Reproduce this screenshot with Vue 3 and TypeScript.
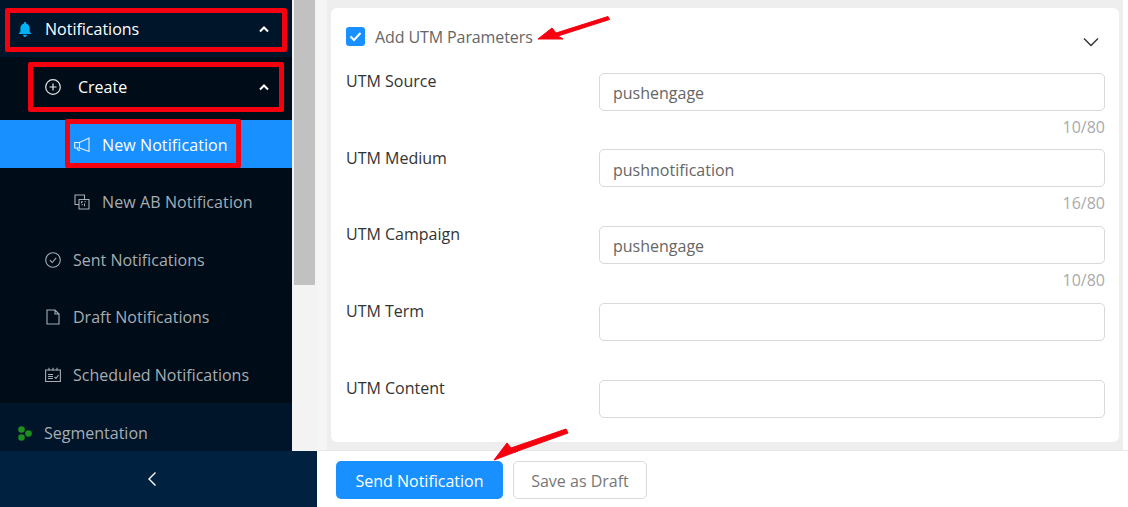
<script setup lang="ts">
const fields = [
  { label: 'UTM Source', value: 'pushengage', count: '10/80' },
  { label: 'UTM Medium', value: 'pushnotification', count: '16/80' },
  { label: 'UTM Campaign', value: 'pushengage', count: '10/80' },
  { label: 'UTM Term', value: '', count: '' },
  { label: 'UTM Content', value: '', count: '' },
]
</script>

<template>
  <div class="page">
    <div class="left">
      <div class="left-top">
        <aside class="sidebar">
          <div class="row top-row light">
            <svg class="ic1" width="14" height="15" viewBox="0 0 14 15"><path d="M7 0c.6 0 1 .4 1 1v.6c2.200.5 3.600 2.300 3.600 4.600v3.400L13.400 12H.6l1.800-2.400V6.200C2.400 3.900 3.800 2.100 6 1.600V1c0-.6.4-1 1-1zM5 12.800h4C9 14 8.100 15 7 15s-2-1-2-2.200z" fill="#00b2f5"/></svg>
            <span class="t1">Notifications</span>
            <svg class="caret" width="10" height="7" viewBox="0 0 10 7"><path d="M1 5.500 5 1.500l4 4" fill="none" stroke="#fff" stroke-width="2"/></svg>
          </div>
          <div class="sub">
            <div class="row create light">
              <svg class="ic2" width="16" height="16" viewBox="0 0 16 16" fill="none" stroke="#e8e8e8" stroke-width="1.200"><circle cx="8" cy="8" r="7.300"/><path d="M8 4.500v7M4.500 8h7"/></svg>
              <span class="t2">Create</span>
              <svg class="caret" width="10" height="7" viewBox="0 0 10 7"><path d="M1 5.500 5 1.500l4 4" fill="none" stroke="#fff" stroke-width="2"/></svg>
            </div>
            <div class="row nested active">
              <svg class="ic3" width="16" height="16" viewBox="0 0 16 16" fill="none" stroke="#e6f3ff" stroke-width="1.100"><path d="M15 1v13.500L5.500 11H.7V5.500H5.500zM5.500 5.500V11M3.500 11.300c-.4 1.700 1.200 2.700 2.500 1.700"/></svg>
              <span class="t3">New Notification</span>
            </div>
            <div class="row nested">
              <svg class="ic3" width="16" height="16" viewBox="0 0 16 16" fill="none" stroke="#a6adb4" stroke-width="1.100"><path d="M5 10.500H1V1h9.500v4"/><path d="M5 5.500h10V15H5z"/><path d="M7.500 9.200V7.800h1.400M10.500 7.800h1.300M7.500 10.800h1.400M10.500 12.300v-2.900"/></svg>
              <span class="t3">New AB Notification</span>
            </div>
            <div class="row">
              <svg class="ic2" width="16" height="16" viewBox="0 0 16 16" fill="none" stroke="#a6adb4" stroke-width="1.100"><circle cx="8" cy="8" r="7.300"/><path d="M4.800 8.200 7.200 10.500 11.200 5.800"/></svg>
              <span class="t4">Sent Notifications</span>
            </div>
            <div class="row">
              <svg class="ic2" width="16" height="16" viewBox="0 0 16 16" fill="none" stroke="#a6adb4" stroke-width="1.100"><path d="M2 1h8l4 4v10H2zM10 1v4h4"/></svg>
              <span class="t4">Draft Notifications</span>
            </div>
            <div class="row">
              <svg class="ic2" width="16" height="16" viewBox="0 0 16 16" fill="none" stroke="#a6adb4" stroke-width="1.100"><path d="M.6 3h14.800v11.500H.6zM4 .8v3M8 .8v3M12 .8v3M3 7.500h5M3 9.500h5M3 11.500h5M9.500 10l1.500 1.500 2.500-3.500"/></svg>
              <span class="t4">Scheduled Notifications</span>
            </div>
          </div>
          <div class="row seg">
            <svg class="ic1" width="14" height="15" viewBox="0 0 14 15" fill="#1e8e1e"><circle cx="3.500" cy="3.500" r="3.300"/><circle cx="3.500" cy="11.500" r="3.300"/><circle cx="10.500" cy="7.500" r="3.300"/></svg>
            <span class="t5">Segmentation</span>
          </div>
        </aside>
        <div class="scrollbar"><div class="thumb"></div></div>
      </div>
      <div class="collapse">
        <svg width="10" height="16" viewBox="0 0 10 16"><path d="M8.500 1.500 2 8l6.500 6.500" fill="none" stroke="#fff" stroke-width="1.400"/></svg>
      </div>
    </div>

    <main class="main">
      <div class="content">
        <section class="card">
          <div class="head">
            <span class="check">
              <svg width="13" height="11" viewBox="0 0 13 11"><path d="M1.500 5.500 5 9l6.500-7" fill="none" stroke="#fff" stroke-width="2"/></svg>
            </span>
            <span class="head-label">Add UTM Parameters</span>
            <svg class="chev" width="16" height="10" viewBox="0 0 16 10"><path d="M1 1.500 8 8.500l7-7" fill="none" stroke="#333" stroke-width="1.400"/></svg>
          </div>
          <div class="form">
            <div v-for="f in fields" :key="f.label" class="field">
              <label class="lbl">{{ f.label }}</label>
              <div class="control">
                <div class="input">{{ f.value }}</div>
                <div class="count">{{ f.count }}</div>
              </div>
            </div>
          </div>
        </section>
      </div>
      <footer class="footer">
        <button class="btn primary">Send Notification</button>
        <button class="btn ghost">Save as Draft</button>
      </footer>
    </main>

    <div class="mark m1"></div>
    <div class="mark m2"></div>
    <div class="mark m3"></div>
    <svg class="arrows" width="1128" height="507" viewBox="0 0 1128 507">
      <path d="M538 39 552 28 556 33 608 16.500 609.500 19.500 558 36 563 39z" fill="#f5000f" stroke="#f5000f" stroke-width="1" stroke-linejoin="round"/>
      <path d="M494 460 507 443 511 448 566 429 568 433 515 452 518 451z" fill="#f5000f" stroke="#f5000f" stroke-width="1" stroke-linejoin="round"/>
    </svg>
  </div>
</template>

<style>
html, body { margin: 0; padding: 0; }
</style>

<style scoped>
.page {
  position: relative;
  width: 1128px;
  height: 507px;
  overflow: hidden;
  display: flex;
  font-family: "Open Sans", "Noto Sans", sans-serif;
  background: #fff;
}
.left { width: 317px; flex: none; display: flex; flex-direction: column; }
.left-top { flex: 1; min-height: 0; display: flex; background: #f3f3f3; }
.sidebar { width: 292px; flex: none; background: #001529; overflow: hidden; padding-top: 5px; box-sizing: border-box; }
.scrollbar { width: 25px; padding-left: 2px; box-sizing: border-box; background: #f3f3f3; }
.thumb { width: 21px; height: 285px; background: #c1c1c1; }
.collapse { height: 56px; background: #002140; display: flex; align-items: center; justify-content: center; flex: none; padding-right: 14px; box-sizing: border-box; }
.row {
  height: 48px;
  box-sizing: border-box;
  display: flex;
  align-items: center;
  color: #a6adb4;
  font-size: 16px;
  white-space: nowrap;
  padding-left: 45px;
  position: relative;
}
.light { color: #fff; }
.top-row { padding-left: 18px; margin-bottom: 4px; }
.seg { padding-left: 18px; margin-top: 6px; }
.t1 { margin-left: 13px; }
.t2 { margin-left: 17px; }
.t3 { margin-left: 12px; letter-spacing: .1px; }
.t4 { margin-left: 12px; }
.t5 { margin-left: 12px; }
.caret { position: absolute; right: 23px; top: 21px; }
.sub { background: #000c17; height: 346px; padding-top: 5.5px; box-sizing: border-box; display: flex; flex-direction: column; gap: 9.5px; }
.sub .row { padding-top: 1px; }
.active { background: #1890ff; color: #fff; }
.nested { padding-left: 74px; }
.main { flex: 1; min-width: 0; display: flex; flex-direction: column; }
.content {
  flex: 1;
  min-height: 0;
  margin-right: 5px;
  padding: 8px 4px 8px 14px;
  background: linear-gradient(to right, #f5f5f5 10px, #eeeeee 10px);
}
.card { height: 434px; box-sizing: border-box; background: #fff; border-radius: 6px; padding: 19px 14px 0 15px; }
.head { display: flex; align-items: center; height: 19px; position: relative; }
.check { width: 19px; height: 19px; background: #1890ff; border-radius: 3px; display: flex; align-items: center; justify-content: center; }
.head-label { margin-left: 10px; font-size: 16px; color: #666; letter-spacing: -.1px; }
.chev { position: absolute; right: 6px; top: 10px; }
.form { margin-top: 26.600px; display: flex; flex-direction: column; }
.field { height: 76.750px; display: grid; grid-template-columns: 253px 506px; }
.lbl { font-size: 16px; color: #333; line-height: 16px; padding-top: .3px; }
.input { height: 38px; box-sizing: border-box; border: 1px solid #d9d9d9; border-radius: 5px; padding: .3px 13px 0; line-height: 38px; font-size: 16px; color: #666; }
.count { text-align: right; font-size: 16px; color: #aaa; margin-top: 6px; line-height: 20px; }
.footer { height: 57px; flex: none; box-sizing: border-box; background: #fff; border-top: 1px solid #e8e8e8; padding: 10px 0 0 19px; display: flex; gap: 10px; align-items: flex-start; }
.btn { height: 38px; box-sizing: border-box; border-radius: 5px; font-family: inherit; font-size: 16px; padding: 2px 0 0; }
.primary { width: 167px; background: #1890ff; border: 0; color: #fff; }
.ghost { width: 134px; background: #fff; border: 1px solid #d9d9d9; color: #777; }
.mark { position: absolute; box-sizing: border-box; border: 5px solid #f5000f; border-radius: 2px; pointer-events: none; }
.m1 { left: 5px; top: 8px; width: 282px; height: 44px; }
.m2 { left: 28px; top: 62px; width: 256px; height: 50px; }
.m3 { left: 65px; top: 119px; width: 176px; height: 49px; }
.arrows { position: absolute; left: 0; top: 0; pointer-events: none; }
</style>
